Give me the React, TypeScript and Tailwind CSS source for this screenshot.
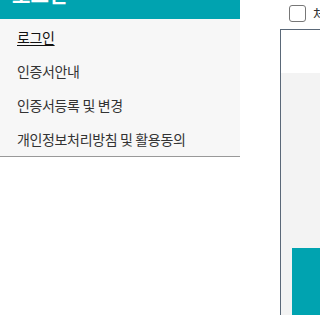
import React from "react";

const font = { fontFamily: '"Noto Sans CJK KR", "Noto Sans", sans-serif' };

export default function App() {
  const items = ["로그인", "인증서안내", "인증서등록 및 변경", "개인정보처리방침 및 활용동의"];
  return (
    <div className="w-[320px] h-[315px] overflow-hidden bg-white flex" style={font}>
      <div className="w-[240px] shrink-0 flex flex-col">
        <div className="bg-[#00a3b0] h-[19px] overflow-hidden">
          <div className="text-white text-[20px] font-bold leading-[24px] pl-[12px] -mt-[17px]">로그인</div>
        </div>
        <div className="bg-[#f7f7f7] border-b border-[#999999] flex flex-col pt-[1px]">
          {items.map((t, i) => (
            <div key={t} className="h-[34px] flex items-center pl-[17px]">
              <span
                className={
                  "text-[14px] tracking-[-0.35px] " +
                  (i === 0 ? "text-[#111111] underline underline-offset-[2px]" : "text-[#333333]")
                }
              >
                {t}
              </span>
            </div>
          ))}
        </div>
      </div>
      <div className="flex-1 flex flex-col">
        <div className="h-[29px] flex items-start pt-[5px] pl-[49px] gap-[7px]">
          <div className="w-[17px] h-[17px] shrink-0 border border-[#777777] rounded-[3px] bg-white" />
          <span className="text-[14px] leading-[17px] text-[#333333] whitespace-nowrap">체크</span>
        </div>
        <div className="ml-[40px] flex-1 flex flex-col border-l border-t border-[#5a6878]">
          <div className="h-[43px] bg-white" />
          <div className="flex-1 bg-[#f3f3f3] flex flex-col justify-end pl-[11px]">
            <div className="h-[67px] bg-[#00a3b0]" />
          </div>
        </div>
      </div>
    </div>
  );
}
